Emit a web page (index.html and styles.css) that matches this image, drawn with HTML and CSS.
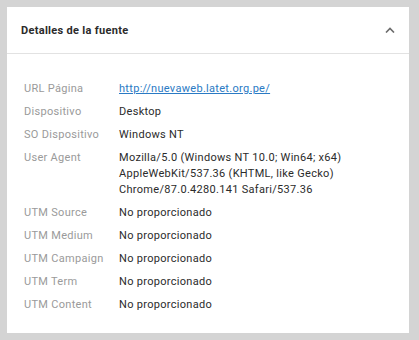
FILE: index.html
```html
<!DOCTYPE html>
<html lang="es">
<head>
    <meta charset="UTF-8">
    <meta name="viewport" content="width=device-width, initial-scale=1.0">
    <title>Detalles de la fuente</title>
    <link rel="stylesheet" href="styles.css">
</head>
<body>
    <div class="card">
        <div class="card-header">
            <h2>Detalles de la fuente</h2>
            <svg class="toggle" width="10" height="6" viewBox="0 0 10 6">
                <polyline points="1,5.5 5,1.5 9,5.5" fill="none" stroke="#6b6b6b" stroke-width="1.6"/>
            </svg>
        </div>

        <div class="details">
            <div class="label">URL Página</div>
            <div class="value"><a href="#">http://nuevaweb.latet.org.pe/</a></div>

            <div class="label">Dispositivo</div>
            <div class="value">Desktop</div>

            <div class="label">SO Dispositivo</div>
            <div class="value">Windows NT</div>

            <div class="label">User Agent</div>
            <div class="value">Mozilla/5.0 (Windows NT 10.0; Win64; x64)<br>AppleWebKit/537.36 (KHTML, like Gecko)<br>Chrome/87.0.4280.141 Safari/537.36</div>

            <div class="label">UTM Source</div>
            <div class="value">No proporcionado</div>

            <div class="label">UTM Medium</div>
            <div class="value">No proporcionado</div>

            <div class="label">UTM Campaign</div>
            <div class="value">No proporcionado</div>

            <div class="label">UTM Term</div>
            <div class="value">No proporcionado</div>

            <div class="label">UTM Content</div>
            <div class="value">No proporcionado</div>
        </div>
    </div>
</body>
</html>
```

FILE: styles.css
```css
body {
    font-family: Roboto, "Noto Sans", sans-serif;
    margin: 0;
    padding: 7px 10px 7px 7px;
    background-color: #d4d4d4;
    letter-spacing: 0.3px;
}

.card {
    background-color: #fff;
    height: 326px;
    box-sizing: border-box;
}

.card-header {
    display: flex;
    justify-content: space-between;
    align-items: center;
    height: 46px;
    padding: 0 14px 0 14px;
    border-bottom: 1px solid #e2e2e2;
}

.card-header h2 {
    margin: 0;
    font-size: 11px;
    font-weight: 700;
    color: #2b2b2b;
}

.toggle {
    display: block;
}

.details {
    display: grid;
    grid-template-columns: 95px 1fr;
    row-gap: 7px;
    padding: 27px 17px 0 17px;
    font-size: 11px;
    line-height: 16px;
}

.label {
    color: #9a9a9a;
}

.value {
    color: #2b2b2b;
}

.value a {
    color: #2a7ac4;
}
```
